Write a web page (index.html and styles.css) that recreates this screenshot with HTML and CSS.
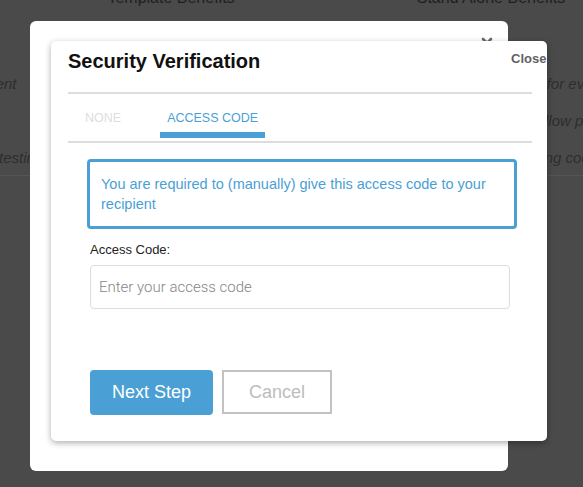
FILE: index.html
```html
<!DOCTYPE html>
<html lang="en">
<head>
<meta charset="utf-8">
<title>Security Verification</title>
<link rel="stylesheet" href="styles.css">
</head>
<body>
<div class="page">
  <div class="heads">
    <div class="head">Template Benefits</div>
    <div class="head">Stand Alone Benefits</div>
  </div>
  <div class="rows">
    <div class="row">
      <div class="cell-l"><span>Sign for a recipient</span></div>
      <div class="cell-r">Great for everyone</div>
    </div>
    <div class="row">
      <div class="cell-l"><span>Reminders</span></div>
      <div class="cell-r">Can allow payments</div>
    </div>
    <div class="row last">
      <div class="cell-l"><span>Collect and display client testimonials</span></div>
      <div class="cell-r">Tracking codes</div>
    </div>
  </div>
</div>

<div class="modal-back">
  <svg class="back-x" width="12" height="12" viewBox="0 0 12 12"><path d="M2 2 L10 10 M10 2 L2 10" stroke="#6a6a6a" stroke-width="2.6" stroke-linecap="round"/></svg>
</div>

<div class="modal">
  <button class="close">Close</button>
  <h2 class="title">Security Verification</h2>
  <div class="divider"></div>
  <div class="tabs">
    <div class="tab">NONE</div>
    <div class="tab active">ACCESS CODE</div>
  </div>
  <div class="divider tabs-line"></div>
  <div class="alert">You are required to (manually) give this access code to your recipient</div>
  <label class="label" for="code">Access Code:</label>
  <input class="input" id="code" type="text" placeholder="Enter your access code">
  <div class="actions">
    <button class="btn primary">Next Step</button>
    <button class="btn secondary">Cancel</button>
  </div>
</div>
</body>
</html>
```

FILE: styles.css
```css
* { box-sizing: border-box; }

html, body {
  margin: 0;
  padding: 0;
  height: 100%;
}

body {
  background: #4a4a4a;
  font-family: "Liberation Sans", Arial, Helvetica, sans-serif;
  overflow: hidden;
  position: relative;
}

/* dimmed background page */
.page {
  color: #262626;
}

.heads {
  display: grid;
  grid-template-columns: 320px 320px;
  margin-left: 11px;
  margin-top: -12px;
}

.head {
  font-size: 16px;
  line-height: 20px;
  text-align: center;
  color: #1f1f1f;
}

.rows {
  margin-top: 57px;
}

.row {
  display: flex;
  align-items: center;
  height: 37px;
  font-style: italic;
  font-size: 15px;
  color: #2e2e2e;
  white-space: nowrap;
}

.row.last {
  border-bottom: 1px solid #555555;
}

.cell-l {
  width: 92px;
  margin-left: -92px;
  display: flex;
  justify-content: center;
  flex: none;
}

.cell-r {
  margin-left: auto;
  width: 78px;
  flex: none;
}

/* windows */
.modal-back {
  position: absolute;
  left: 30px;
  top: 21px;
  width: 478px;
  height: 450px;
  background: #ffffff;
  border-radius: 6px;
}

.back-x {
  position: absolute;
  left: 451px;
  top: 16px;
}

.modal {
  position: absolute;
  left: 51px;
  top: 41px;
  width: 496px;
  height: 400px;
  background: #ffffff;
  border-radius: 5px;
  overflow: hidden;
  box-shadow: 0 2px 6px rgba(0, 0, 0, 0.32);
  padding: 9px 15px 0 17px;
}

.close {
  position: absolute;
  left: 460px;
  top: 11px;
  border: 0;
  background: none;
  padding: 0;
  font-family: "Liberation Sans", Arial, sans-serif;
  font-weight: bold;
  font-size: 13px;
  line-height: 14px;
  color: #5f6165;
  white-space: nowrap;
}

.title {
  margin: 0;
  font-size: 20px;
  line-height: 23px;
  font-weight: bold;
  color: #111111;
}

.divider {
  height: 2px;
  background: #dddddd;
  margin-top: 19px;
}

.tabs {
  display: flex;
  gap: 32px;
  padding-left: 10px;
}

.tab {
  padding: 17px 7px 6px;
  font-size: 12.5px;
  line-height: 15px;
  color: #dedede;
  border-bottom: 6px solid transparent;
}

.tab.active {
  color: #4a9fd5;
  border-bottom-color: #4a9fd5;
}

.tabs-line {
  margin-top: 3px;
}

.alert {
  margin: 16px 15px 0 19px;
  border: 3px solid #4a9fd5;
  border-radius: 4px;
  padding: 12px 11px 12px;
  font-size: 14.5px;
  line-height: 20px;
  color: #4a9fd5;
}

.label {
  display: block;
  margin: 13px 22px 0;
  font-size: 13px;
  line-height: 16px;
  color: #222222;
}

.input {
  display: block;
  width: 420px;
  height: 44px;
  margin: 7px 0 0 22px;
  border: 1px solid #dddddd;
  border-radius: 4px;
  padding: 0 8px;
  font-family: Roboto, "Liberation Sans", sans-serif;
  font-weight: 300;
  font-size: 15px;
  color: #333;
  outline: none;
}

.input::placeholder {
  color: #858585;
}

.actions {
  display: flex;
  align-items: flex-start;
  gap: 9px;
  margin: 61px 0 0 22px;
}

.btn {
  font-family: "Liberation Sans", Arial, sans-serif;
  font-size: 18px;
  padding: 0;
  cursor: pointer;
}

.btn.primary {
  width: 123px;
  height: 45px;
  background: #4a9fd5;
  color: #ffffff;
  border: 0;
  border-radius: 4px;
}

.btn.secondary {
  width: 110px;
  height: 44px;
  background: #ffffff;
  color: #bdbdbd;
  border: 2px solid #c2c2c2;
  border-radius: 0;
}
```
